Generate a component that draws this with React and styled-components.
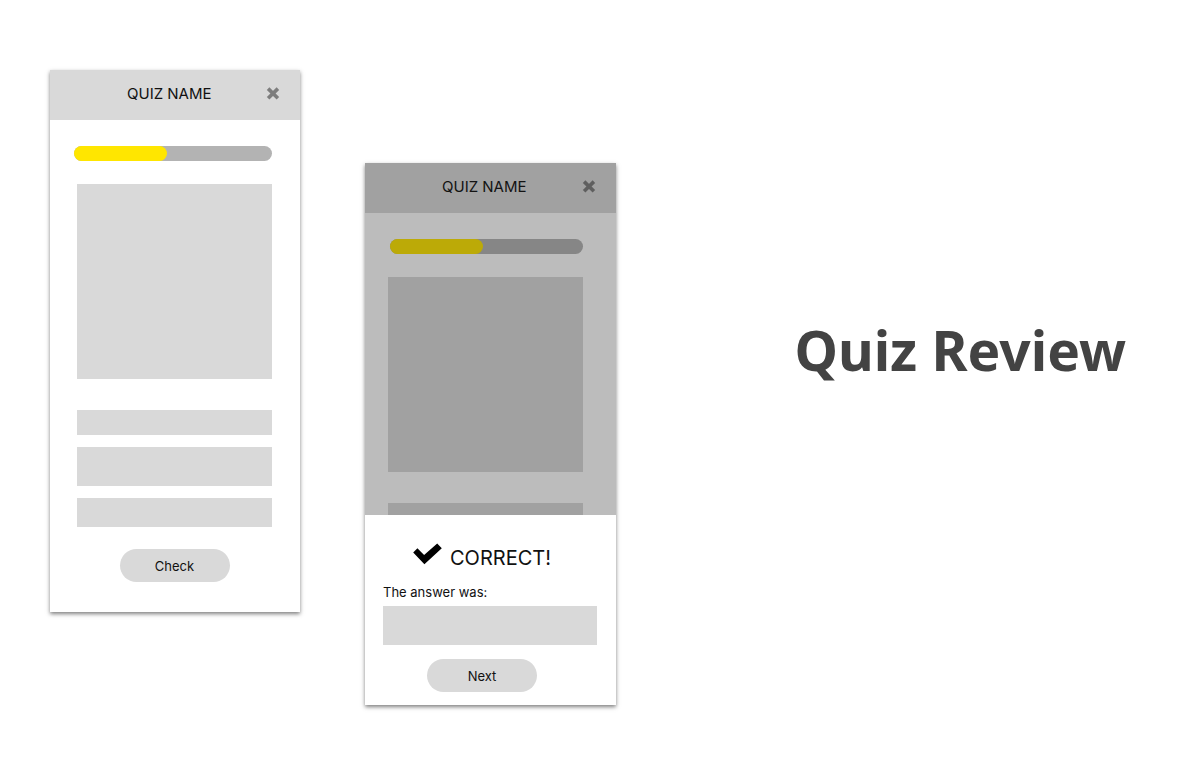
import React from "react";
import styled, { createGlobalStyle } from "styled-components";

const GlobalStyle = createGlobalStyle`
  *, *::before, *::after { box-sizing: border-box; }
  body {
    margin: 0;
    background: #fff;
    color: #111;
    font-family: Inter, "Liberation Sans", sans-serif;
  }
  h1, h2, h3, p { margin: 0; font-weight: 400; }
`;

const Page = styled.main`
  display: flex;
  align-items: flex-start;
  min-height: 100vh;
  padding: 70px 74px 56px 50px;
`;

const Phone = styled.section`
  position: relative;
  flex: none;
  width: ${(p) => p.$width}px;
  margin-top: ${(p) => p.$drop || 0}px;
  margin-right: ${(p) => p.$gap || 0}px;
  background: #fff;
  box-shadow: 0 2px 4px rgba(0, 0, 0, 0.5);
`;

const Header = styled.header`
  display: flex;
  align-items: center;
  justify-content: space-between;
  height: 50px;
  padding: 0 20px 2px 77px;
  background: #d9d9d9;
`;

const QuizName = styled.h2`
  font-size: 15px;
  line-height: 20px;
  white-space: nowrap;
`;

const CloseButton = styled.button`
  display: flex;
  padding: 0;
  border: 0;
  background: none;
  color: #7d7d7d;
  cursor: pointer;
`;

const Body = styled.div`
  display: flex;
  flex-direction: column;
  padding: ${(p) => (p.$shifted ? "26px 33px 30px 23px" : "26px 28px 30px 27px")};
`;

const Track = styled.div`
  height: 15px;
  margin: ${(p) => (p.$shifted ? "0 0 23px 2px" : "0 0 23px -3px")};
  border-radius: 8px;
  background: #b3b3b3;
`;

const Fill = styled.div`
  width: 93px;
  height: 100%;
  border-radius: 8px;
  background: #ffe600;
`;

const Picture = styled.div`
  height: 195px;
  margin-bottom: 31px;
  background: #d9d9d9;
`;

const Block = styled.div`
  height: ${(p) => p.$height}px;
  margin-bottom: 12px;
  background: #d9d9d9;
`;

const PillButton = styled.button`
  align-self: center;
  width: 110px;
  height: 33px;
  margin: ${(p) => p.$margin};
  padding: 0;
  border: 0;
  border-radius: 17px;
  background: #d9d9d9;
  color: #111;
  font: 13px/16px Inter, "Liberation Sans", sans-serif;
  cursor: pointer;
`;

const Scrim = styled.div`
  position: absolute;
  inset: 0;
  background: rgba(24, 24, 24, 0.29);
`;

const Sheet = styled.div`
  position: absolute;
  inset: auto 0 0;
  display: flex;
  flex-direction: column;
  padding: 28px 19px 13px 18px;
  background: #fff;
`;

const Verdict = styled.div`
  display: flex;
  align-items: flex-start;
  gap: 8px;
  padding-left: 30px;
  margin-bottom: 10px;
`;

const VerdictText = styled.h3`
  font-size: 20px;
  line-height: 30px;
`;

const AnswerLabel = styled.p`
  margin-bottom: 5px;
  font-size: 13px;
  line-height: 18px;
`;

const Answer = styled.div`
  height: 39px;
  background: #d9d9d9;
`;

const Caption = styled.div`
  flex: 1;
  padding-top: 240px;
  text-align: right;
`;

const Title = styled.h1`
  color: #434343;
  font: 700 55px/80px "Noto Sans", sans-serif;
  white-space: nowrap;
`;

function CloseIcon() {
  return (
    <svg width="14" height="14" viewBox="0 0 14 14" aria-hidden="true">
      <path d="M2.1 1.6 11.9 11.2M11.9 1.6 2.1 11.2" stroke="currentColor" strokeWidth="3.6" fill="none" />
    </svg>
  );
}

function CheckIcon() {
  return (
    <svg width="29" height="22" viewBox="0 0 29 22" aria-hidden="true">
      <path d="M.2 9.6 4.4 5.3 11.1 12 24.2 .6 28.8 5.2 11.4 21.2Z" fill="#000" />
    </svg>
  );
}

function QuizScreen({ shifted, width, drop, gap, children }) {
  return (
    <Phone $width={width} $drop={drop} $gap={gap}>
      <Header>
        <QuizName>QUIZ NAME</QuizName>
        <CloseButton type="button" aria-label="Close">
          <CloseIcon />
        </CloseButton>
      </Header>
      <Body $shifted={shifted}>
        <Track $shifted={shifted}>
          <Fill />
        </Track>
        <Picture />
        <Block $height={25} />
        <Block $height={39} />
        <Block $height={29} />
        <PillButton type="button" $margin="10px 0 0">Check</PillButton>
      </Body>
      {children}
    </Phone>
  );
}

export default function App() {
  return (
    <>
      <GlobalStyle />
      <Page>
        <QuizScreen width={250} gap={65} />
        <QuizScreen shifted width={251} drop={93}>
          <Scrim />
          <Sheet>
            <Verdict>
              <CheckIcon />
              <VerdictText>CORRECT!</VerdictText>
            </Verdict>
            <AnswerLabel>The answer was:</AnswerLabel>
            <Answer />
            <PillButton type="button" $margin="14px 16px 0 0">Next</PillButton>
          </Sheet>
        </QuizScreen>
        <Caption>
          <Title>Quiz Review</Title>
        </Caption>
      </Page>
    </>
  );
}
